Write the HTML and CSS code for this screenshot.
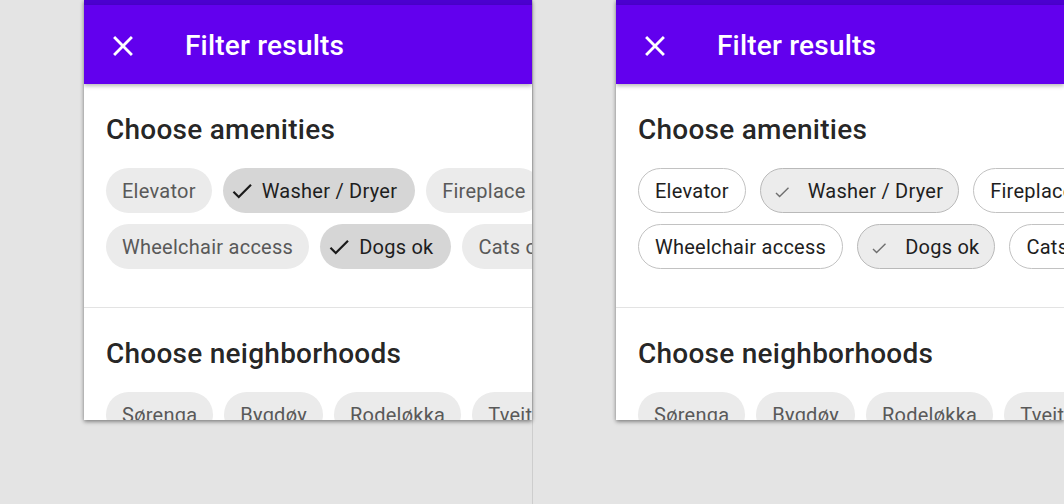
FILE: index.html
```html
<!DOCTYPE html>
<html lang="en">
<head>
<meta charset="utf-8">
<title>Filter results</title>
<link rel="stylesheet" href="styles.css">
</head>
<body>
<div class="stage">
  <div class="half half-left">
    <div class="panel">
      <div class="status"></div>
      <header class="appbar">
        <svg class="close" viewBox="0 0 24 24" width="34" height="34"><path fill="#fff" d="M19 6.41L17.59 5 12 10.59 6.41 5 5 6.41 10.59 12 5 17.59 6.41 19 12 13.41 17.59 19 19 17.59 13.41 12z"/></svg>
        <h1 class="title">Filter results</h1>
      </header>
      <section class="section first">
        <h2 class="heading">Choose amenities</h2>
        <div class="chips">
          <div class="row">
            <span class="chip">Elevator</span>
            <span class="chip selected"><svg class="check" viewBox="0 0 24 24" width="26" height="26"><path d="M9 16.17L4.83 12l-1.42 1.41L9 19 21 7l-1.41-1.41z"/></svg><span>Washer / Dryer</span></span>
            <span class="chip">Fireplace</span>
          </div>
          <div class="row">
            <span class="chip">Wheelchair access</span>
            <span class="chip selected"><svg class="check" viewBox="0 0 24 24" width="26" height="26"><path d="M9 16.17L4.83 12l-1.42 1.41L9 19 21 7l-1.41-1.41z"/></svg><span>Dogs ok</span></span>
            <span class="chip">Cats ok</span>
          </div>
        </div>
      </section>
      <section class="section">
        <h2 class="heading">Choose neighborhoods</h2>
        <div class="chips">
          <div class="row">
            <span class="chip">Sørenga</span>
            <span class="chip">Bygdøy</span>
            <span class="chip">Rodeløkka</span>
            <span class="chip">Tveita</span>
          </div>
        </div>
      </section>
    </div>
  </div>
  <div class="half half-right">
    <div class="panel">
      <div class="status"></div>
      <header class="appbar">
        <svg class="close" viewBox="0 0 24 24" width="34" height="34"><path fill="#fff" d="M19 6.41L17.59 5 12 10.59 6.41 5 5 6.41 10.59 12 5 17.59 6.41 19 12 13.41 17.59 19 19 17.59 13.41 12z"/></svg>
        <h1 class="title">Filter results</h1>
      </header>
      <section class="section first">
        <h2 class="heading">Choose amenities</h2>
        <div class="chips outlined">
          <div class="row">
            <span class="chip">Elevator</span>
            <span class="chip selected"><svg class="check-thin" viewBox="0 0 20 20" width="20" height="20"><path d="M4 11l3.6 3.6L16.5 5.8" fill="none" stroke="#6f6f6f" stroke-width="1.4"/></svg><span>Washer / Dryer</span></span>
            <span class="chip">Fireplace</span>
          </div>
          <div class="row">
            <span class="chip">Wheelchair access</span>
            <span class="chip selected"><svg class="check-thin" viewBox="0 0 20 20" width="20" height="20"><path d="M4 11l3.6 3.6L16.5 5.8" fill="none" stroke="#6f6f6f" stroke-width="1.4"/></svg><span>Dogs ok</span></span>
            <span class="chip">Cats ok</span>
          </div>
        </div>
      </section>
      <section class="section">
        <h2 class="heading">Choose neighborhoods</h2>
        <div class="chips">
          <div class="row">
            <span class="chip">Sørenga</span>
            <span class="chip">Bygdøy</span>
            <span class="chip">Rodeløkka</span>
            <span class="chip">Tveita</span>
          </div>
        </div>
      </section>
    </div>
  </div>
</div>
</body>
</html>
```
FILE: styles.css
```css
* { box-sizing: border-box; }

html, body {
  margin: 0;
  padding: 0;
}

body {
  background: #e4e4e4;
  font-family: Roboto, "Noto Sans", "Liberation Sans", sans-serif;
  width: 1064px;
  height: 504px;
  overflow: hidden;
}

.stage {
  display: flex;
  height: 504px;
}

.half {
  height: 504px;
}

.half-left {
  width: 533px;
  padding-left: 84px;
  border-right: 1px solid #cdcdcd;
}

.half-right {
  flex: 1;
  padding-left: 83px;
}

.panel {
  width: 448px;
  height: 420px;
  background: #fff;
  overflow: hidden;
  box-shadow: 0 2px 4px rgba(0, 0, 0, 0.35), 0 0 4px rgba(0, 0, 0, 0.18);
  display: flex;
  flex-direction: column;
}

.status {
  height: 5px;
  background: #4b00cf;
  flex-shrink: 0;
}

.appbar {
  height: 79px;
  flex-shrink: 0;
  background: #6200ee;
  display: flex;
  align-items: center;
  padding: 3px 0 0 22px;
  position: relative;
  z-index: 1;
  box-shadow: 0 2px 4px rgba(0, 0, 0, 0.28);
}

.close {
  display: block;
  flex-shrink: 0;
}

.title {
  margin: 0 0 0 45px;
  font-size: 28px;
  font-weight: 500;
  color: #fff;
  letter-spacing: 0.2px;
  line-height: 36px;
}

.section {
  padding: 26px 0 38px 22px;
  border-bottom: 1px solid #e3e3e3;
  flex-shrink: 0;
}

.heading {
  margin: 0;
  font-size: 28px;
  font-weight: 500;
  line-height: 40px;
  color: rgba(0, 0, 0, 0.87);
  letter-spacing: 0.25px;
  white-space: nowrap;
}

.chips {
  margin-top: 18px;
  display: flex;
  flex-direction: column;
  gap: 11px;
}

.row {
  display: flex;
  flex-wrap: nowrap;
  gap: 11px;
}

.chip {
  flex-shrink: 0;
  height: 45px;
  border-radius: 23px;
  padding: 0 16px;
  display: inline-flex;
  align-items: center;
  font-size: 20px;
  letter-spacing: 0.25px;
  white-space: nowrap;
  background: #ebebeb;
  color: #595959;
}

.chip.selected {
  background: #d6d6d6;
  color: #1e1e1e;
  padding: 0 18px 0 6px;
}

.check {
  fill: #1a1a1a;
  margin-right: 7px;
  flex-shrink: 0;
}

.outlined .row {
  gap: 14px;
}

.outlined .chip {
  background: #fff;
  border: 1px solid #c2c2c2;
  color: #1e1e1e;
}

.outlined .chip.selected {
  background: #ececec;
  border-color: #b9b9b9;
  padding: 0 15px 0 11px;
}

.check-thin {
  margin-right: 16px;
  margin-top: 3px;
  flex-shrink: 0;
}
```
